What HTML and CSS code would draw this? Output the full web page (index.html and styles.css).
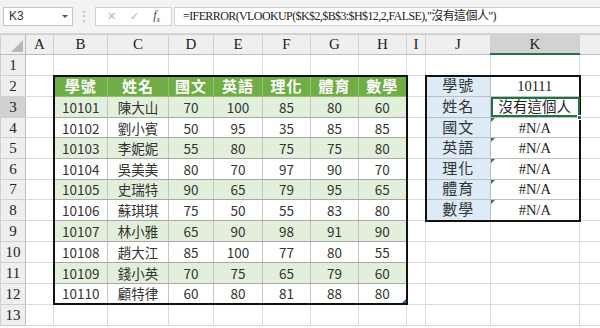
FILE: index.html
```html
<!DOCTYPE html>
<html lang="zh-Hant">
<head>
  <meta charset="UTF-8" />
  <title>IFERROR VLOOKUP</title>
  <link rel="stylesheet" href="styles.css">
</head>
<body>
  <div class="toolbar">
    <div class="namebox">K3<span class="caret"></span></div>
    <div class="grip">&#8942;</div>
    <div class="fxbox">
      <span class="btn">&#10005;</span>
      <span class="btn">&#10003;</span>
      <span class="fx">f<sub>x</sub></span>
    </div>
    <div class="formula">=IFERROR(VLOOKUP($K$2,$B$3:$H$12,2,FALSE),"沒有這個人")</div>
  </div>

  <table class="sheet">
    <colgroup>
      <col style="width:25px"><col style="width:28px"><col style="width:54px"><col style="width:61px">
      <col style="width:45px"><col style="width:49px"><col style="width:48px"><col style="width:48px">
      <col style="width:48px"><col style="width:19px"><col style="width:65px"><col style="width:89px">
      <col style="width:21px">
    </colgroup>
    <tr class="colhead">
      <th class="corner"><span class="tri"></span></th>
      <th>A</th><th>B</th><th>C</th><th>D</th><th>E</th><th>F</th><th>G</th><th>H</th><th>I</th><th>J</th><th class="sel">K</th><th></th>
    </tr>
    <tr><th>1</th><td></td><td></td><td></td><td></td><td></td><td></td><td></td><td></td><td></td><td></td><td></td><td></td></tr>
    <tr>
      <th>2</th><td></td>
      <td class="hd top lft">學號</td><td class="hd top">姓名</td><td class="hd top">國文</td><td class="hd top">英語</td><td class="hd top">理化</td><td class="hd top">體育</td><td class="hd top rgt">數學</td>
      <td></td><td class="key top lft">學號</td><td class="val top rgt">10111</td><td></td>
    </tr>
    <tr>
      <th class="selrow">3</th><td></td>
      <td class="d g lft">10101</td><td class="d g">陳大山</td><td class="d g">70</td><td class="d g">100</td><td class="d g">85</td><td class="d g">80</td><td class="d g rgt">60</td>
      <td></td><td class="key lft">姓名</td><td class="val rgt cur">沒有這個人<span class="handle"></span></td><td></td>
    </tr>
    <tr>
      <th>4</th><td></td>
      <td class="d lft">10102</td><td class="d">劉小賓</td><td class="d">50</td><td class="d">95</td><td class="d">35</td><td class="d">85</td><td class="d rgt">85</td>
      <td></td><td class="key lft">國文</td><td class="val rgt err">#N/A</td><td></td>
    </tr>
    <tr>
      <th>5</th><td></td>
      <td class="d g lft">10103</td><td class="d g">李妮妮</td><td class="d g">55</td><td class="d g">80</td><td class="d g">75</td><td class="d g">75</td><td class="d g rgt">80</td>
      <td></td><td class="key lft">英語</td><td class="val rgt err">#N/A</td><td></td>
    </tr>
    <tr>
      <th>6</th><td></td>
      <td class="d lft">10104</td><td class="d">吳美美</td><td class="d">80</td><td class="d">70</td><td class="d">97</td><td class="d">90</td><td class="d rgt">70</td>
      <td></td><td class="key lft">理化</td><td class="val rgt err">#N/A</td><td></td>
    </tr>
    <tr>
      <th>7</th><td></td>
      <td class="d g lft">10105</td><td class="d g">史瑞特</td><td class="d g">90</td><td class="d g">65</td><td class="d g">79</td><td class="d g">95</td><td class="d g rgt">65</td>
      <td></td><td class="key lft">體育</td><td class="val rgt err">#N/A</td><td></td>
    </tr>
    <tr>
      <th>8</th><td></td>
      <td class="d lft">10106</td><td class="d">蘇琪琪</td><td class="d">75</td><td class="d">50</td><td class="d">55</td><td class="d">83</td><td class="d rgt">80</td>
      <td></td><td class="key lft bot">數學</td><td class="val rgt bot err">#N/A</td><td></td>
    </tr>
    <tr>
      <th>9</th><td></td>
      <td class="d g lft">10107</td><td class="d g">林小雅</td><td class="d g">65</td><td class="d g">90</td><td class="d g">98</td><td class="d g">91</td><td class="d g rgt">90</td>
      <td></td><td></td><td></td><td></td>
    </tr>
    <tr>
      <th>10</th><td></td>
      <td class="d lft">10108</td><td class="d">趙大江</td><td class="d">85</td><td class="d">100</td><td class="d">77</td><td class="d">80</td><td class="d rgt">55</td>
      <td></td><td></td><td></td><td></td>
    </tr>
    <tr>
      <th>11</th><td></td>
      <td class="d g lft">10109</td><td class="d g">錢小英</td><td class="d g">70</td><td class="d g">75</td><td class="d g">65</td><td class="d g">79</td><td class="d g rgt">60</td>
      <td></td><td></td><td></td><td></td>
    </tr>
    <tr>
      <th>12</th><td></td>
      <td class="d lft bot">10110</td><td class="d bot">顧特律</td><td class="d bot">60</td><td class="d bot">80</td><td class="d bot">81</td><td class="d bot">88</td><td class="d rgt bot corner-mark">80</td>
      <td></td><td></td><td></td><td></td>
    </tr>
    <tr><th>13</th><td></td><td></td><td></td><td></td><td></td><td></td><td></td><td></td><td></td><td></td><td></td><td></td></tr>
  </table>
</body>
</html>
```

FILE: styles.css
```css
body {
  margin: 0;
  width: 600px;
  height: 328px;
  overflow: hidden;
  background-color: #ffffff;
  font-family: "Liberation Serif", "Noto Sans CJK TC", serif;
}

/* formula bar */
.toolbar {
  height: 34px;
  background-color: #f3f3f3;
  display: flex;
  align-items: center;
  padding: 0 0 0 3px;
  box-sizing: border-box;
  border-bottom: 1px solid #d6d6d6;
}

.namebox {
  width: 70px;
  height: 19px;
  background-color: white;
  border: 1px solid #c6c6c6;
  box-sizing: border-box;
  font-size: 12px;
  line-height: 17px;
  padding-left: 5px;
  color: #333;
  position: relative;
  font-family: "Liberation Sans", sans-serif;
}

.caret {
  position: absolute;
  right: 4px;
  top: 7px;
  border-left: 3px solid transparent;
  border-right: 3px solid transparent;
  border-top: 3px solid #555;
}

.grip {
  width: 22px;
  text-align: center;
  color: #b0b0b0;
  font-size: 12px;
}

.fxbox {
  width: 77px;
  height: 19px;
  background-color: white;
  border: 1px solid #d0d0d0;
  box-sizing: border-box;
  display: flex;
  align-items: center;
  justify-content: space-around;
  padding: 0 4px;
}

.btn {
  color: #b5b5b5;
  font-size: 11px;
  font-family: "DejaVu Sans", sans-serif;
}

.fx {
  font-style: italic;
  font-size: 12px;
  color: #444;
}

.fx sub {
  font-size: 8px;
}

.formula {
  flex: 1;
  height: 19px;
  margin-left: 2px;
  background-color: white;
  border: 1px solid #d0d0d0;
  border-right: none;
  box-sizing: border-box;
  font-size: 12px;
  letter-spacing: -0.6px;
  line-height: 17px;
  padding-left: 8px;
  color: #222;
  white-space: nowrap;
}

/* grid */
.sheet {
  border-collapse: collapse;
  table-layout: fixed;
  width: 601px;
}

.sheet td {
  height: 19.6px;
  padding: 0;
  border: 1px solid #dadada;
  text-align: center;
  white-space: nowrap;
  overflow: visible;
}

.sheet th {
  background-color: #efefef;
  border: 1px solid #d0d0d0;
  font-weight: normal;
  font-size: 15px;
  color: #222;
  padding: 0;
  height: 19.6px;
  line-height: 18px;
}

.colhead th {
  height: 18px;
  border-bottom: 1px solid #bdbdbd;
}

.sheet tr > th:first-child {
  border-right: 1px solid #bdbdbd;
}

.colhead th.sel {
  background-color: #d2d2d2;
  border-bottom: 2px solid #217346;
}

.sheet th.selrow {
  background-color: #d2d2d2;
  border-right: 2px solid #217346;
}

.corner {
  position: relative;
}

.tri {
  position: absolute;
  right: 2px;
  bottom: 2px;
  border-left: 12px solid transparent;
  border-bottom: 12px solid #b8b8b8;
}

/* score table */
.hd {
  background-color: #70ad47;
  color: white;
  font-family: "Noto Sans CJK TC", sans-serif;
  font-weight: bold;
  font-size: 15px;
  line-height: 18px;
  letter-spacing: 1px;
}

.sheet td.hd {
  border-color: #8fbf6f;
}

.sheet td.d {
  font-family: "Noto Sans CJK TC", sans-serif;
  font-size: 13.5px;
  line-height: 18px;
  color: #333;
  border-color: #a8a8a8 #c4c4c4;
}

.sheet td.g {
  background-color: #e2efda;
}

/* lookup table */
.sheet td.key {
  background-color: #ddebf7;
  font-size: 15px;
  line-height: 18px;
  color: #333;
  border-color: #bfbfbf;
  letter-spacing: 1px;
}

.sheet td.val {
  font-size: 14.5px;
  line-height: 18px;
  color: #222;
  border-color: #bfbfbf;
  position: relative;
}

.sheet td.cur {
  outline: 2px solid #217346;
  outline-offset: -2px;
}

.handle {
  position: absolute;
  right: -3px;
  bottom: -3px;
  width: 5px;
  height: 5px;
  background-color: #217346;
  border: 1px solid white;
  box-sizing: border-box;
}

.sheet td.err::before {
  content: "";
  position: absolute;
  left: 0;
  top: 0;
  border-top: 4px solid #2e7d32;
  border-right: 4px solid transparent;
}

.sheet td.corner-mark {
  position: relative;
}

.sheet td.corner-mark::after {
  content: "";
  position: absolute;
  right: 0;
  bottom: 0;
  border-bottom: 4px solid #2f5faf;
  border-left: 4px solid transparent;
}

/* thick outlines */
.sheet td.top { border-top: 2px solid #111; }
.sheet td.bot { border-bottom: 2px solid #111; }
.sheet td.lft { border-left: 2px solid #111; }
.sheet td.rgt { border-right: 2px solid #111; }
```
